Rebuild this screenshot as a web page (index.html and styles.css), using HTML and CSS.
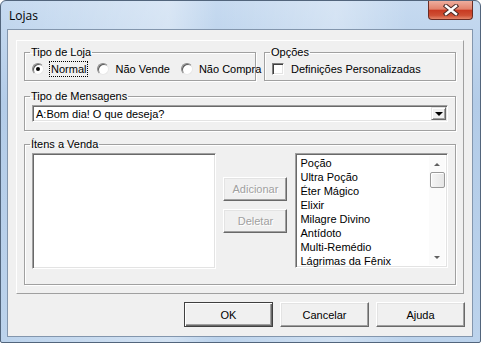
FILE: index.html
```html
<!DOCTYPE html>
<html lang="pt">
<head>
  <meta charset="UTF-8">
  <title>Lojas</title>
  <link rel="stylesheet" href="styles.css">
</head>
<body>
  <div class="janela">
    <div class="titulo">
      <span class="titulo-texto">Lojas</span>
      <div class="fechar">
        <svg width="16" height="12" viewBox="0 0 16 12">
          <path d="M3 2 L13 10 M13 2 L3 10" stroke="#4a2a26" stroke-width="4.4" stroke-linecap="square"/>
          <path d="M3 2 L13 10 M13 2 L3 10" stroke="#fff" stroke-width="2.4" stroke-linecap="square"/>
        </svg>
      </div>
    </div>

    <div class="cliente">
      <div class="painel">
        <div class="linha">
          <fieldset class="grupo tipo-loja">
            <legend>Tipo de Loja</legend>
            <div class="opcoes-linha">
              <div class="opcao">
                <span class="radio marcado"></span>
                <span class="rotulo foco">Normal</span>
              </div>
              <div class="opcao">
                <span class="radio"></span>
                <span class="rotulo">Não Vende</span>
              </div>
              <div class="opcao">
                <span class="radio"></span>
                <span class="rotulo">Não Compra</span>
              </div>
            </div>
          </fieldset>
          <fieldset class="grupo opcoes">
            <legend>Opções</legend>
            <div class="opcao">
              <span class="caixa"></span>
              <span class="rotulo">Definições Personalizadas</span>
            </div>
          </fieldset>
        </div>

        <fieldset class="grupo mensagens">
          <legend>Tipo de Mensagens</legend>
          <div class="combo">
            <span class="combo-texto">A:Bom dia! O que deseja?</span>
            <span class="combo-botao"><span class="seta-baixo"></span></span>
          </div>
        </fieldset>

        <fieldset class="grupo itens">
          <legend>Ítens a Venda</legend>
          <div class="itens-corpo">
            <div class="lista vendidos"></div>
            <div class="botoes-lista">
              <div class="botao desativado">Adicionar</div>
              <div class="botao desativado">Deletar</div>
            </div>
            <div class="lista disponiveis">
              <ul class="itens-lista">
                <li>Poção</li>
                <li>Ultra Poção</li>
                <li>Éter Mágico</li>
                <li>Elixir</li>
                <li>Milagre Divino</li>
                <li>Antídoto</li>
                <li>Multi-Remédio</li>
                <li>Lágrimas da Fênix</li>
              </ul>
              <div class="rolagem">
                <span class="seta-cima"></span>
                <span class="polegar"></span>
                <span class="seta-baixo cinza"></span>
              </div>
            </div>
          </div>
        </fieldset>
      </div>

      <div class="acoes">
        <div class="botao padrao">OK</div>
        <div class="botao">Cancelar</div>
        <div class="botao">Ajuda</div>
      </div>
    </div>
  </div>
</body>
</html>
```

FILE: styles.css
```css
* {
  box-sizing: border-box;
}
body {
  margin: 0;
  font-family: "Liberation Sans", Arial, sans-serif;
  font-size: 11px;
  color: #000;
  background: #fff;
}
.janela {
  width: 481px;
  height: 343px;
  border: 1px solid #52657c;
  border-radius: 6px 6px 2px 2px;
  padding: 0 7px 5px 6px;
  background:
    linear-gradient(90deg, rgba(255,255,255,0) 0%, rgba(255,255,255,0.35) 35%, rgba(255,255,255,0) 45%, rgba(255,255,255,0.3) 70%, rgba(255,255,255,0) 85%),
    linear-gradient(180deg, #c6daf0 0%, #b3cce8 30%, #bcd3ec 100%);
}
.titulo {
  height: 28px;
  display: flex;
  justify-content: space-between;
  align-items: flex-start;
}
.titulo-texto {
  font-family: "Open Sans", "Noto Sans", sans-serif;
  font-size: 12px;
  margin: 6px 0 0 2px;
  color: #000;
}
.fechar {
  width: 45px;
  height: 19px;
  border: 1px solid #6a2c24;
  border-top: none;
  border-radius: 0 0 4px 4px;
  background: linear-gradient(180deg, #eeae9e 0%, #e2826c 45%, #c83a22 52%, #cf4f34 80%, #e4866a 100%);
  display: flex;
  align-items: center;
  justify-content: center;
}
.cliente {
  height: 308px;
  border: 1px solid #8396ad;
  background: #f0f0f0;
}
.painel {
  height: 254px;
  margin: 10px 8px 0 8px;
  border: 1px solid;
  border-color: #fff #a0a0a0 #a0a0a0 #fff;
  padding: 5px 7px 0 7px;
}
.linha {
  display: flex;
  gap: 8px;
}
.grupo {
  margin: 0;
  min-width: 0;
  border: 1px solid #a0a0a0;
  box-shadow: inset 1px 1px 0 #fff, 1px 1px 0 #fff;
  padding: 2px 7px 0 7px;
}
.grupo legend {
  padding: 0 1px;
  margin-left: -2px;
  line-height: 13px;
}
.tipo-loja {
  width: 232px;
  padding-bottom: 3px;
}
.opcoes {
  width: 192px;
  padding-bottom: 3px;
}
.opcoes-linha {
  display: flex;
  gap: 9px;
  white-space: nowrap;
}
.opcao {
  display: flex;
  align-items: center;
  height: 16px;
  white-space: nowrap;
}
.rotulo {
  padding: 0 1px;
  border: 1px solid transparent;
  line-height: 14px;
  margin-left: 4px;
}
.rotulo.foco {
  border: 1px dotted #000;
  margin-left: 5px;
}
.radio {
  flex: none;
  width: 12px;
  height: 12px;
  border-radius: 50%;
  background: #fff;
  border: 1px solid;
  border-color: #8a8a8a #e8e8e8 #e8e8e8 #8a8a8a;
  box-shadow: inset 1px 1px 0 #5a5a5a;
  display: flex;
  align-items: center;
  justify-content: center;
}
.radio.marcado::after {
  content: "";
  width: 4px;
  height: 4px;
  border-radius: 50%;
  background: #000;
}
.caixa {
  flex: none;
  width: 12px;
  height: 12px;
  background: #fff;
  border: 1px solid;
  border-color: #808080 #fff #fff #808080;
  box-shadow: inset 1px 1px 0 #404040, inset -1px -1px 0 #e3e3e3;
}
.opcoes .rotulo {
  margin-left: 5px;
}
.mensagens {
  margin-top: 9px;
  padding-bottom: 8px;
}
.combo {
  height: 17px;
  display: flex;
  align-items: stretch;
  background: #fff;
  border: 1px solid;
  border-color: #a0a0a0 #fff #fff #a0a0a0;
  box-shadow: inset 1px 1px 0 #696969, inset -1px -1px 0 #e3e3e3;
  padding: 1px;
}
.combo-texto {
  flex: 1;
  padding-left: 2px;
  line-height: 13px;
  margin-top: 1px;
}
.combo-botao {
  width: 15px;
  background: #f0f0f0;
  border: 1px solid;
  border-color: #e3e3e3 #696969 #696969 #e3e3e3;
  box-shadow: inset 1px 1px 0 #fff, inset -1px -1px 0 #a0a0a0;
  display: flex;
  align-items: center;
  justify-content: center;
}
.seta-baixo {
  width: 0;
  height: 0;
  border-left: 4px solid transparent;
  border-right: 4px solid transparent;
  border-top: 4px solid #000;
}
.seta-baixo.cinza {
  border-left-width: 3px;
  border-right-width: 3px;
  border-top: 3px solid #606060;
}
.seta-cima {
  width: 0;
  height: 0;
  border-left: 3px solid transparent;
  border-right: 3px solid transparent;
  border-bottom: 3px solid #606060;
}
.itens {
  margin-top: 7px;
  padding-bottom: 15px;
}
.itens-corpo {
  display: flex;
  align-items: flex-start;
}
.lista {
  background: #fff;
  border: 1px solid;
  border-color: #a0a0a0 #fff #fff #a0a0a0;
  box-shadow: inset 1px 1px 0 #696969, inset -1px -1px 0 #e3e3e3;
}
.vendidos {
  width: 185px;
  height: 116px;
}
.botoes-lista {
  display: flex;
  flex-direction: column;
  gap: 8px;
  margin: 24px 8px 0 7px;
}
.botoes-lista .botao {
  width: 64px;
  height: 24px;
}
.disponiveis {
  width: 153px;
  height: 115px;
  display: flex;
  padding: 2px;
}
.itens-lista {
  list-style: none;
  margin: 0;
  padding: 0 0 0 2px;
  flex: 1;
}
.itens-lista li {
  height: 14px;
  line-height: 14px;
}
.rolagem {
  width: 16px;
  display: flex;
  flex-direction: column;
  align-items: center;
  background: #fbfbfb;
  padding-top: 7px;
  padding-bottom: 6px;
}
.polegar {
  width: 15px;
  height: 16px;
  margin-top: 6px;
  background: linear-gradient(90deg, #f6f6f6, #e6e6e6);
  border: 1px solid #9a9a9a;
  border-radius: 2px;
  box-shadow: inset 1px 1px 0 #fff;
}
.rolagem .seta-baixo {
  margin-top: auto;
}
.acoes {
  display: flex;
  justify-content: flex-end;
  gap: 7px;
  margin: 8px 7px 0 0;
}
.botao {
  width: 89px;
  height: 25px;
  display: flex;
  align-items: center;
  justify-content: center;
  background: #f0f0f0;
  border: 1px solid;
  border-color: #fff #696969 #696969 #fff;
  box-shadow: inset -1px -1px 0 #a0a0a0, inset 1px 1px 0 #e3e3e3;
}
.botao.padrao {
  border: 1px solid #404040;
  box-shadow: inset 1px 1px 0 #fff, inset -1px -1px 0 #696969, inset -2px -2px 0 #a0a0a0;
}
.botao.desativado {
  color: #a0a0a0;
  text-shadow: 1px 1px 0 #fff;
}
```
